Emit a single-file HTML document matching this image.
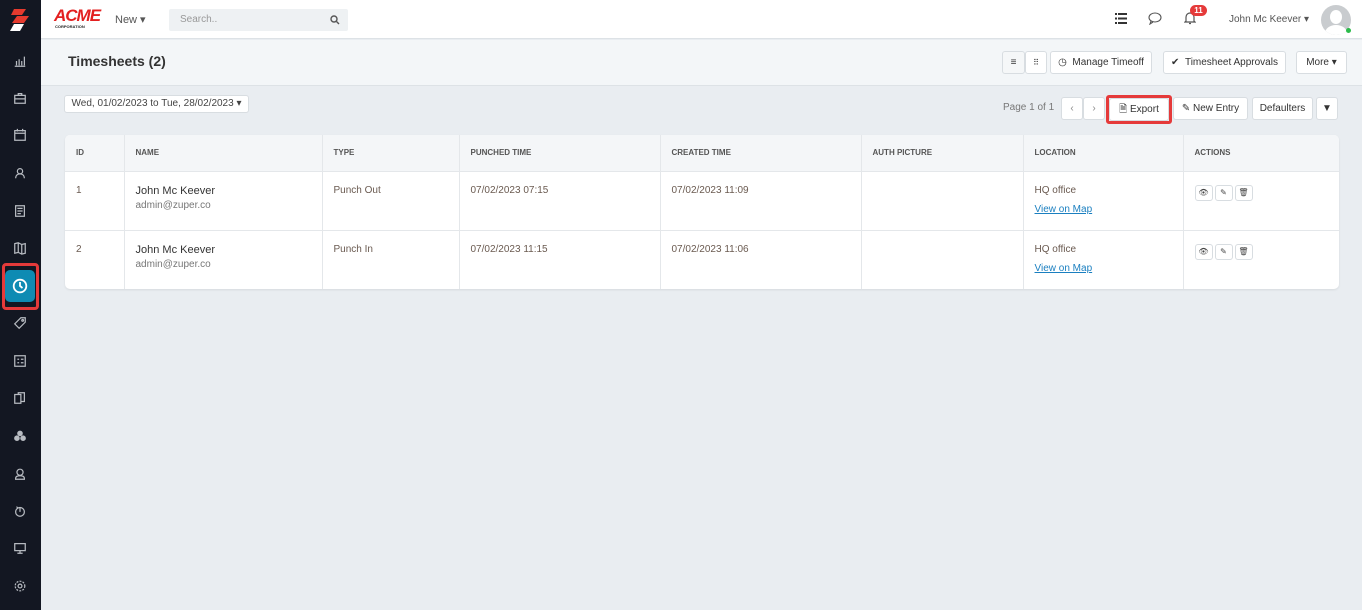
<!DOCTYPE html>
<html><head><meta charset="utf-8"><style>
*{box-sizing:border-box;margin:0;padding:0}
body{width:1362px;height:610px;overflow:hidden;background:#e9edf1;font-family:"Liberation Sans",sans-serif;font-size:11px;color:#555;position:relative}
.abs{position:absolute}
#side{left:0;top:0;width:41px;height:610px;background:#131722}
.si{position:absolute;left:13px;width:14px;height:14px}
#top{left:41px;top:0;width:1321px;height:39px;background:#fff;border-bottom:1px solid #dde2e6}
#hdr{left:41px;top:40px;width:1321px;height:46px;background:#f3f6f8;border-bottom:1px solid #dde2e6}
.btn{position:absolute;height:23px;background:#fff;border:1px solid #d8dde1;border-radius:3px;font-size:10px;color:#333;line-height:21px;text-align:center}
table{border-collapse:collapse;position:absolute;left:65px;top:135px;width:1274px;background:#fff;border-radius:5px;overflow:hidden;box-shadow:0 1px 2px rgba(0,0,0,.08)}
th{height:36px;background:#f4f6f8;font-size:8px;font-weight:bold;color:#555;text-align:left;padding-left:11px;border-right:1px solid #e4e7ea;border-bottom:1px solid #e4e7ea}
td{height:59px;vertical-align:top;padding:13px 0 0 11px;font-size:10px;color:#6a5a50;border-right:1px solid #e4e7ea;border-bottom:1px solid #e4e7ea}
tr:last-child td{border-bottom:none}
th:last-child,td:last-child{border-right:none}
.nm{font-size:11px;color:#333}
.em{font-size:10px;color:#777;margin-top:3px}
a{color:#1a7fc0;text-decoration:underline;display:inline-block;margin-top:8px}
.ab{display:inline-block;width:18px;height:16px;border:1px solid #d8dde1;border-radius:3px;margin-right:2px;vertical-align:top;font-size:8px;text-align:center;line-height:14px;color:#444}
</style></head><body>
<div id="side" class="abs">
<svg class="abs" style="left:8px;top:8px" width="24" height="24" viewBox="0 0 24 24"><path d="M6 1h12l-4 6H3z" fill="#e53a2e"/><path d="M9 8h12l-5 7H4z" fill="#e53a2e"/><path d="M6 16h10l-4 7H2z" fill="#fff"/></svg>
<svg class="si" style="top:54px" viewBox="0 0 16 16" fill="none" stroke="#b8bcc2" stroke-width="1.4"><path d="M2 14h12M4 13V8M7 13V6M10 13V8M13 13V3"/></svg>
<svg class="si" style="top:91px" viewBox="0 0 16 16" fill="none" stroke="#b8bcc2" stroke-width="1.4"><rect x="2" y="5" width="12" height="9"/><path d="M6 5V3h4v2M2 9h12"/></svg>
<svg class="si" style="top:128px" viewBox="0 0 16 16" fill="none" stroke="#b8bcc2" stroke-width="1.4"><rect x="2" y="3" width="12" height="11"/><path d="M2 6h12M5 1v3M11 1v3"/></svg>
<svg class="si" style="top:166px" viewBox="0 0 16 16" fill="none" stroke="#b8bcc2" stroke-width="1.4"><circle cx="8" cy="6" r="3"/><path d="M3 14c0-3 2-5 5-5s5 2 5 5"/></svg>
<svg class="si" style="top:204px" viewBox="0 0 16 16" fill="none" stroke="#b8bcc2" stroke-width="1.4"><rect x="3" y="2" width="10" height="12"/><path d="M5 5h6M5 8h6M5 11h4"/></svg>
<svg class="si" style="top:241px" viewBox="0 0 16 16" fill="none" stroke="#b8bcc2" stroke-width="1.4"><path d="M2 3l4-1 4 2 4-1v11l-4 1-4-2-4 1zM6 2v11M10 4v11"/></svg>
<div class="abs" style="left:2px;top:263px;width:37px;height:47px;border:3px solid #e53a3a;border-radius:4px"></div>
<div class="abs" style="left:5px;top:270px;width:30px;height:32px;background:#0e8bb3;border-radius:5px"></div>
<svg class="abs" style="left:12px;top:278px" width="16" height="16" viewBox="0 0 16 16" fill="none" stroke="#fff" stroke-width="1.8"><circle cx="8" cy="8" r="6.3"/><path d="M8 4v4l2.5 2"/></svg>
<svg class="si" style="top:316px" viewBox="0 0 16 16" fill="none" stroke="#b8bcc2" stroke-width="1.4"><path d="M9 2h5v5l-7 7-5-5z"/><circle cx="11" cy="5" r="1"/></svg>
<svg class="si" style="top:354px" viewBox="0 0 16 16" fill="none" stroke="#b8bcc2" stroke-width="1.4"><rect x="2" y="2" width="12" height="12"/><path d="M5 6h2M9 6h3M5 10h2M9 10h3"/></svg>
<svg class="si" style="top:391px" viewBox="0 0 16 16" fill="none" stroke="#b8bcc2" stroke-width="1.4"><rect x="2" y="4" width="7" height="10"/><path d="M6 4V2h7v10h-4"/></svg>
<svg class="si" style="top:429px" viewBox="0 0 16 16" fill="#b8bcc2"><circle cx="8" cy="5" r="3.2"/><circle cx="4.5" cy="10.5" r="3.2"/><circle cx="11.5" cy="10.5" r="3.2"/></svg>
<svg class="si" style="top:467px" viewBox="0 0 16 16" fill="none" stroke="#b8bcc2" stroke-width="1.4"><circle cx="8" cy="6" r="3.5"/><path d="M3 14v-1c0-2 2-3 5-3s5 1 5 3v1z"/></svg>
<svg class="si" style="top:504px" viewBox="0 0 16 16" fill="none" stroke="#b8bcc2" stroke-width="1.4"><circle cx="8" cy="9" r="5"/><path d="M8 9V4M4 3l2 2"/></svg>
<svg class="si" style="top:541px" viewBox="0 0 16 16" fill="none" stroke="#b8bcc2" stroke-width="1.4"><rect x="2" y="3" width="12" height="8"/><path d="M8 11v3M5 14h6"/></svg>
<svg class="si" style="top:579px" viewBox="0 0 16 16" fill="none" stroke="#b8bcc2" stroke-width="1.4"><circle cx="8" cy="8" r="2.2"/><circle cx="8" cy="8" r="5.5" stroke-dasharray="2.2 1.4"/></svg>
</div>
<div id="top" class="abs">
<div class="abs" style="left:13px;top:9px;font:italic 900 17px 'Liberation Sans';color:#e32020;letter-spacing:-1px;line-height:14px">ACME</div>
<div class="abs" style="left:14px;top:24px;font:bold 4px 'Liberation Sans';color:#222">CORPORATION</div>
<div class="abs" style="left:74px;top:13px;font-size:11px;color:#555">New ▾</div>
<div class="abs" style="left:128px;top:9px;width:179px;height:22px;background:#eef1f3;border-radius:2px;padding:5px 11px;color:#999;font-size:10px">Search..</div>
<svg class="abs" style="left:289px;top:15px" width="10" height="10" viewBox="0 0 10 10" fill="none" stroke="#555" stroke-width="1.4"><circle cx="4" cy="4" r="3"/><path d="M6.5 6.5L9 9"/></svg>
<svg class="abs" style="left:1074px;top:13px" width="12" height="11" viewBox="0 0 12 11" fill="#333"><rect x="0" y="0" width="2" height="2"/><rect x="3" y="0" width="9" height="2"/><rect x="0" y="4.5" width="2" height="2"/><rect x="3" y="4.5" width="9" height="2"/><rect x="0" y="9" width="2" height="2"/><rect x="3" y="9" width="9" height="2"/></svg>
<svg class="abs" style="left:1107px;top:12px" width="14" height="13" viewBox="0 0 14 13" fill="none" stroke="#555" stroke-width="1.1"><ellipse cx="7" cy="5.5" rx="6" ry="4.5"/><path d="M3 9l-1 3 3-2"/></svg>
<svg class="abs" style="left:1143px;top:11px" width="12" height="14" viewBox="0 0 12 14" fill="none" stroke="#555" stroke-width="1.2"><path d="M2 10V6a4 4 0 018 0v4l1 1H1zM5 12.5h2"/></svg>
<div class="abs" style="left:1149px;top:5px;width:17px;height:11px;background:#e53a3a;border-radius:6px;color:#fff;font-size:8px;font-weight:bold;text-align:center;line-height:11px">11</div>
<div class="abs" style="left:1188px;top:14px;font-size:10px;color:#555">John Mc Keever ▾</div>
<div class="abs" style="left:1280px;top:5px;width:30px;height:30px;border-radius:50%;background:#c9cccf;overflow:hidden"><div style="position:absolute;left:9px;top:5px;width:12px;height:14px;border-radius:50%;background:#fff"></div><div style="position:absolute;left:4px;top:20px;width:22px;height:16px;border-radius:50%;background:#fff"></div></div>
<div class="abs" style="left:1305px;top:28px;width:5px;height:5px;border-radius:50%;background:#2bbb4a"></div>
</div>
<div id="hdr" class="abs">
<div class="abs" style="left:27px;top:13px;font-size:14px;font-weight:bold;color:#333">Timesheets (2)</div>
</div>
<div class="btn" style="left:1002px;top:51px;width:23px;background:#f5f7f8">≡</div>
<div class="btn" style="left:1025px;top:51px;width:22px;font-size:8px">⠿</div>
<div class="btn" style="left:1050px;top:51px;width:102px">◷ &nbsp;Manage Timeoff</div>
<div class="btn" style="left:1163px;top:51px;width:123px">✔ &nbsp;Timesheet Approvals</div>
<div class="btn" style="left:1296px;top:51px;width:51px">More ▾</div>
<div class="btn" style="left:64px;top:95px;width:185px;height:18px;line-height:16px;color:#444">Wed, 01/02/2023 to Tue, 28/02/2023 ▾</div>
<div class="abs" style="left:1003px;top:102px;font-size:10px;color:#777">Page 1 of 1</div>
<div class="btn" style="left:1061px;top:97px;width:22px;color:#888">‹</div>
<div class="btn" style="left:1083px;top:97px;width:22px;color:#888">›</div>
<div class="abs" style="left:1106px;top:95px;width:66px;height:29px;border:3px solid #e53a3a;border-radius:3px"></div>
<div class="btn" style="left:1109px;top:98px;width:60px">🗎 Export</div>
<div class="btn" style="left:1173px;top:97px;width:75px">✎ New Entry</div>
<div class="btn" style="left:1252px;top:97px;width:61px">Defaulters</div>
<div class="btn" style="left:1316px;top:97px;width:22px">▼</div>
<table>
<tr><th style="width:59px">ID</th><th style="width:198px">NAME</th><th style="width:137px">TYPE</th><th style="width:201px">PUNCHED TIME</th><th style="width:201px">CREATED TIME</th><th style="width:162px">AUTH PICTURE</th><th style="width:160px">LOCATION</th><th>ACTIONS</th></tr>
<tr><td>1</td><td><div class="nm">John Mc Keever</div><div class="em">admin@zuper.co</div></td><td>Punch Out</td><td>07/02/2023 07:15</td><td>07/02/2023 11:09</td><td></td><td>HQ office<br><a>View on Map</a></td><td><span class="ab">👁</span><span class="ab">✎</span><span class="ab">🗑</span></td></tr>
<tr><td>2</td><td><div class="nm">John Mc Keever</div><div class="em">admin@zuper.co</div></td><td>Punch In</td><td>07/02/2023 11:15</td><td>07/02/2023 11:06</td><td></td><td>HQ office<br><a>View on Map</a></td><td><span class="ab">👁</span><span class="ab">✎</span><span class="ab">🗑</span></td></tr>
</table>
</body></html>
